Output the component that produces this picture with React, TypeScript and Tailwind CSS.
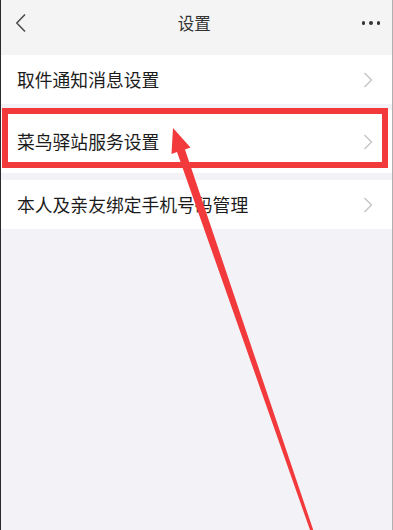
import React from "react";

const Chevron = () => (
  <svg width="10" height="16" viewBox="0 0 10 16" className="shrink-0">
    <path d="M1.5 1 L8.5 8 L1.5 15" fill="none" stroke="#c4c4c8" strokeWidth="1.4" />
  </svg>
);

const Row = ({ label, h }: { label: string; h: string }) => (
  <div className={`flex items-center justify-between bg-white pl-[16px] pr-[19px] ${h}`}>
    <span className="text-[17.8px] text-[#1c1c1c] leading-none">{label}</span>
    <Chevron />
  </div>
);

export default function App() {
  return (
    <div
      className="relative w-[393px] h-[530px] overflow-hidden bg-[#f3f3f7] border-l border-l-[#2a2a2a] border-r border-r-[#b0b0b0]"
      style={{ fontFamily: '"Noto Sans CJK SC", "Noto Sans", sans-serif' }}
    >
      <div className="h-[55px] bg-[#f4f4f5]">
        <div className="h-[46px] flex items-center justify-between pl-[14px] pr-[12px]">
          <svg width="12" height="20" viewBox="0 0 12 20">
            <path d="M10 1.5 L1.8 10 L10 18.5" fill="none" stroke="#4a4a4a" strokeWidth="1.5" />
          </svg>
          <span className="text-[16.5px] text-[#333] leading-none">设置</span>
          <div className="flex items-center gap-[4px]">
            <span className="w-[3.5px] h-[3.5px] rounded-full bg-[#333]" />
            <span className="w-[3.5px] h-[3.5px] rounded-full bg-[#333]" />
            <span className="w-[3.5px] h-[3.5px] rounded-full bg-[#333]" />
          </div>
        </div>
      </div>
      <Row label="取件通知消息设置" h="h-[49px]" />
      <div className="mt-[6px]">
        <Row label="菜鸟驿站服务设置" h="h-[63px]" />
      </div>
      <div className="mt-[7px]">
        <Row label="本人及亲友绑定手机号码管理" h="h-[49px]" />
      </div>

      <div className="absolute left-[1px] top-[108px] w-[386px] h-[60px] border-[6px] border-[#f23a3c]" />

      <svg className="absolute left-0 top-0" width="393" height="530" viewBox="0 0 393 530">
        <polygon
          points="172,128 189.5,147.5 184,149.5 313.6,534 310.4,534 176,152 170.5,154"
          fill="#f23a3c"
        />
      </svg>
    </div>
  );
}
